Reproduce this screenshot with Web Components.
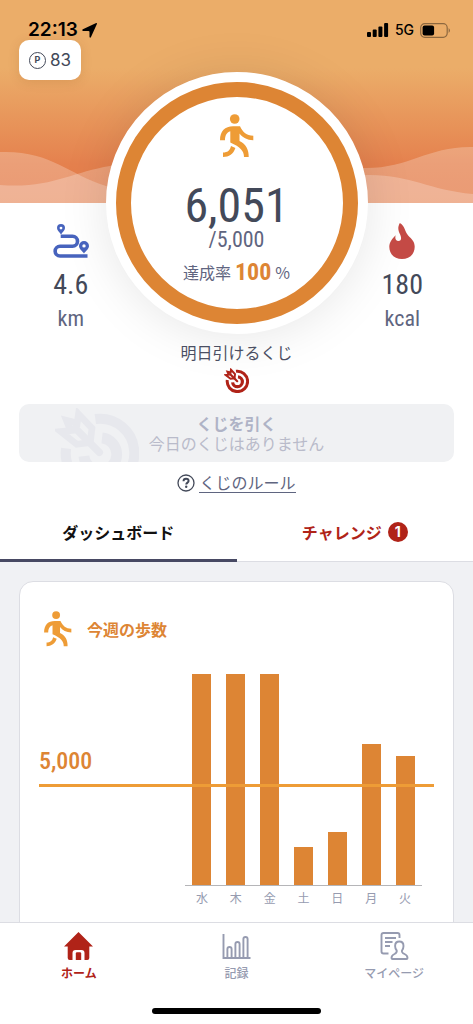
<!DOCTYPE html>
<html lang="ja">
<head>
<meta charset="utf-8">
<meta name="viewport" content="width=device-width, initial-scale=1">
<title>ホーム</title>
<style>
  html, body { margin: 0; height: 100%; }
  body {
    font-family: "Noto Sans CJK JP", sans-serif;
    font-size: 16px; line-height: 20px; color: #4b4f63;
    --orange: #dd8534; --amber: #ee9c36; --red: #b02318; --ink: #434959; --muted: #969bb0; --soft: #5f6580;
    --line: #dcdde3; --panel: #f0f1f4;
    --narrow: "Liberation Sans Narrow", "Roboto Condensed", "Arial Narrow", Roboto, sans-serif;
  }
</style>
</head>
<body>
<walk-app>
  <hero-panel>
    <status-bar slot="top" time="22:13" network="5G"></status-bar>
    <points-badge slot="top" value="83"></points-badge>
    <stat-tile slot="left" value="4.6" unit="km"><app-icon name="route"></app-icon></stat-tile>
    <step-ring slot="center" steps="6,051" goal="/5,000" rate="100"></step-ring>
    <stat-tile slot="right" value="180" unit="kcal"><app-icon name="flame"></app-icon></stat-tile>
  </hero-panel>
  <lottery-panel></lottery-panel>
  <tab-bar></tab-bar>
  <chart-card heading="今週の歩数" goal="5,000"></chart-card>
  <bottom-nav slot="nav"></bottom-nav>
</walk-app>

<script>
const ICONS = {
  walk: ['0 0 34 44', `<g fill="currentColor"><circle cx="14.7" cy="5" r="4.8"/><path d="M0 26.3C0 17 5 12.3 13 12.3H20C23 18.500 26.500 21.500 33.300 21.700V26.300C27 26 22.500 23.500 19.500 19.500V27C26 30 29 36 28.700 43H24C24 37 20.500 33 10.300 28.500V17.300C6.500 18.500 5 22 5 26.300Z"/><path d="M3 43V38.500C7.500 38.500 10 36.500 11 32L15.400 34C13.500 40 9 43 3 43Z"/></g>`],
  route: ['0 0 36 34', `<path d="M7.700 12.300H19.500a5 5 0 0 1 0 10H7a4.850 4.850 0 0 0 0 9.700H34.500" fill="none" stroke="currentColor" stroke-width="3.600"/><path fill="currentColor" fill-rule="evenodd" d="M8 0a4 4 0 0 1 4 4C12 6.500 9.500 8 8 10.500C6.500 8 4 6.500 4 4a4 4 0 0 1 4-4Zm0 2.700a1.400 1.400 0 1 0 0 2.800a1.400 1.400 0 1 0 0-2.800ZM31 17a5 5 0 0 1 5 5C36 25 32.700 27 31 29.500C29.300 27 26 25 26 22a5 5 0 0 1 5-5Zm0 3.200a1.700 1.700 0 1 0 0 3.400a1.700 1.700 0 1 0 0-3.400Z"/>`],
  flame: ['0 0 24 34', `<path fill="currentColor" d="M10 0C15 3 14.500 8 18 12C21 15 24 17.500 24 22.500C24 30 18.500 34 12 34S0 30 0 22.500C0 18 3 14.500 6 11.500C5 15.500 6.500 17 8.500 17C12 17 11.500 13.500 10 10.500C8 6.500 8 3.500 10 0Z"/>`],
  target: ['0 0 25 25', `<g fill="none" stroke="currentColor"><path stroke-width="3" d="M12 3.300A10.200 10.200 0 1 1 3.300 12"/><path stroke-width="3.200" d="M14 8.900A4.900 4.900 0 1 1 8.600 14.300"/><path stroke-width="2" d="M7 1.800L11 6L10.500 10.300L6.500 10.800L1.700 7L4.600 6.700L3.400 3.700L6.600 4.500Z"/><path stroke-width="2.200" stroke-linecap="round" d="M6 6L13.200 13.200"/></g>`],
  help: ['0 0 18 18', `<g fill="none" stroke="currentColor"><circle cx="9" cy="9" r="8" stroke-width="1.300"/><path stroke-width="1.900" d="M6.500 7.300C6.500 5.700 7.600 4.800 9 4.800S11.600 5.700 11.600 7C11.600 8.600 9.200 8.700 9.200 10.600"/></g><circle cx="9.200" cy="12.800" r="1.200" fill="currentColor"/>`],
  arrow: ['0 0 15 15', `<path fill="currentColor" d="M14.200.100Q15.200-.200 14.900.900L9 14Q8.200 15.400 7.500 14V9Q7.500 8 6.500 8H1Q-.600 7.200.900 6.200Z"/>`],
  signal: ['0 0 22 14', `<g fill="currentColor"><rect y="9" width="4" height="5" rx="1"/><rect x="5.700" y="6.500" width="4" height="7.500" rx="1"/><rect x="11.400" y="3.500" width="4" height="10.500" rx="1"/><rect x="17.100" width="4" height="14" rx="1"/></g>`],
  battery: ['0 0 31 15', `<rect x=".700" y=".700" width="26.500" height="13.600" rx="4" fill="none" stroke="#000" stroke-opacity=".4" stroke-width="1.200"/><path d="M28.700 5Q31 7.500 28.700 10Z" fill-opacity=".45"/><rect x="2.600" y="2.600" width="11.500" height="9.800" rx="2"/>`],
  home: ['0 0 29 28', `<path fill="currentColor" d="M14.500 0L29 14.500H25.300V26Q25.300 28 23.300 28H20.500V21Q20.500 18 17.500 18H11.500Q8.500 18 8.500 21V28H5.700Q3.700 28 3.700 26V14.500H0Z"/><path fill="currentColor" d="M11.800 28V21.500Q11.800 20.300 13 20.300H16Q17.200 20.300 17.200 21.500V28Z"/>`],
  record: ['0 0 28 28', `<path d="M1 2V26H28M4.900 26V17Q4.900 15 7 15T9.100 17V26M12.900 26V12Q12.900 10 15 10T17.100 12V26M20.900 26V7Q20.900 5 23 5T25.100 7V26" fill="none" stroke="currentColor" stroke-width="1.900"/>`],
  person: ['0 0 28 28', `<g fill="none" stroke="currentColor" stroke-width="1.900"><path d="M8 21.500H3Q1 21.500 1 19.500V3Q1 1 3 1H17Q19 1 19 3V6M4.500 6H15.500M4.500 10H12M4.500 14H9.500"/><path d="M18.800 9.500C21.500 9.500 23 11.300 23 14C23 16.300 22.300 17.500 21.500 18.500C21 20.500 21.800 21 24 22Q27 23.300 27 26Q27 27 26 27H12Q11 27 11 26Q11 23.300 14 22C16 21 16.700 20.500 16.200 18.500C15.300 17.500 14.600 16.300 14.600 14C14.600 11.300 16 9.500 18.800 9.500Z"/></g>`]
};

function define(tag, css, html) {
  customElements.define(tag, class extends HTMLElement {
    constructor() {
      super();
      this.attachShadow({ mode: 'open' });
    }
    connectedCallback() {
      const attr = name => this.getAttribute(name) || '';
      this.shadowRoot.innerHTML = `<style>:host,*{box-sizing:border-box}${css}</style>${html(attr)}`;
    }
  });
}

define('app-icon', `:host{display:inline-block;flex:none} svg{display:block;width:100%;height:100%}`,
  a => `<svg viewBox="${ICONS[a('name')][0]}" aria-hidden="true">${ICONS[a('name')][1]}</svg>`);

define('walk-app', `
  :host{display:grid;grid-template-rows:minmax(0,1fr) auto;height:100vh;background:#fff}
  main{overflow-y:auto;scrollbar-width:none;display:flex;flex-direction:column}`,
  () => `<main><slot></slot></main><slot name="nav"></slot>`);

define('hero-panel', `
  :host{display:grid;grid-template:203px auto / 1fr 262px 1fr;isolation:isolate;flex:none}
  .sky{grid-area:1/1/2/4;display:grid;background:linear-gradient(#ebad69 0,#ebad69 68px,#e5814e 164px,#e47b48)}
  .sky>*{grid-area:1/1}
  svg{width:100%;height:100%;display:block}
  .left{grid-area:2/1;padding:20px 0 0 36px}
  .right{grid-area:2/3;padding:20px 36px 0 0}
  .center{grid-area:1/2/3/3;padding-top:72px}`,
  () => `<div class="sky"><svg viewBox="0 0 473 203" preserveAspectRatio="none" aria-hidden="true"><g fill="#fff" fill-opacity=".24"><path d="M0 152C50 150 68 174 106 186C190 212 280 166 366 168C410 168 428 146 473 147V203H0Z"/><path d="M0 185C50 189 72 172 110 166C190 150 270 178 366 175C410 174 428 190 473 194V203H0Z"/></g></svg>
  <div><slot name="top"></slot></div></div>
  <div class="center"><slot name="center"></slot></div>
  <div class="left"><slot name="left"></slot></div>
  <div class="right"><slot name="right"></slot></div>`);

define('status-bar', `
  :host{display:flex;justify-content:space-between;align-items:center;height:40px;padding:20px 22px 0 28px;color:#000;font-family:Inter,sans-serif}
  div{display:flex;align-items:center;gap:6px}
  .time{font-size:19px;font-weight:600;gap:4px}
  .net{font-size:14px;font-weight:500}
  .arrow{width:15px;height:15px}.signal{width:22px;height:14px}.battery{width:31px;height:15px}`,
  a => `<div class="time"><span>${a('time')}</span><app-icon class="arrow" name="arrow"></app-icon></div>
  <div class="net"><app-icon class="signal" name="signal"></app-icon><span>${a('network')}</span><app-icon class="battery" name="battery"></app-icon></div>`);

define('points-badge', `
  :host{display:block;padding-left:19px}
  button{display:flex;align-items:center;justify-content:center;gap:4px;width:62px;height:40px;padding:0;border:0;border-radius:10px;background:#fff;color:var(--ink);font:400 17px/20px Inter,sans-serif;box-shadow:0 2px 12px rgba(120,60,0,.14)}
  i{display:grid;place-items:center;width:17px;height:17px;border:1px solid;border-radius:50%;font:700 9px/10px Inter,sans-serif}`,
  a => `<button type="button"><i>P</i>${a('value')}</button>`);

define('stat-tile', `
  :host{display:flex;flex-direction:column;align-items:center;font-family:var(--narrow);color:var(--ink)}
  ::slotted(app-icon){width:36px;height:36px;color:#4763bd}
  :host([slot=right]) ::slotted(app-icon){color:#c44a45}
  strong{font-weight:400;font-size:28px;line-height:36px;margin-top:8px}
  span{font-weight:400;font-size:22px;line-height:32px;color:var(--soft)}`,
  a => `<slot></slot><strong>${a('value')}</strong><span>${a('unit')}</span>`);

define('step-ring', `
  :host{display:flex;flex-direction:column;align-items:center;height:262px;border-radius:50%;border:10px solid #fff;background:#fff;box-shadow:0 2px 50px rgba(0,0,0,.1)}
  .ring{width:100%;height:100%;border:15px solid var(--orange);border-radius:50%;display:flex;flex-direction:column;align-items:center;padding-top:17px}
  app-icon{width:34px;height:44px;color:var(--amber)}
  .steps{font:400 48px/48px var(--narrow);color:var(--ink);margin-top:24px}
  .goal{font:400 22px/20px var(--narrow);color:var(--soft)}
  .rate{display:flex;align-items:center;gap:4px;margin-top:8px;line-height:28px;color:var(--soft)}
  b{font:700 24px/28px var(--narrow);color:var(--orange)}`,
  a => `<div class="ring"><app-icon name="walk"></app-icon><div class="steps">${a('steps')}</div><div class="goal">${a('goal')}</div><div class="rate"><span>達成率</span><b>${a('rate')}</b><span>%</span></div></div>`);

define('lottery-panel', `
  :host{display:flex;flex-direction:column;align-items:center;padding:7px 19px 10px;flex:none;position:relative}
  p{margin:0}
  .mark{width:25px;height:25px;margin-top:6px;color:var(--red)}
  button{display:grid;grid-template:58px / 1fr auto 1fr;align-items:center;width:100%;height:58px;margin-top:11px;padding:0;border:0;border-radius:10px;background:#f0f1f3;color:#b9bbca;font:400 16px/20px "Noto Sans CJK JP",sans-serif;overflow:hidden}
  button b{display:block;color:#afb3c6}
  .ghost{align-self:start;width:84px;height:84px;margin:4px 0 0 36px;color:#e7e8ed}
  a{display:flex;align-items:center;gap:4px;margin-top:10px;color:var(--soft);text-decoration:none}
  a app-icon{width:18px;height:18px;color:var(--ink)}
  a span{border-bottom:1px solid}`,
  () => `<p>明日引けるくじ</p><app-icon class="mark" name="target"></app-icon>
  <button type="button" disabled><app-icon class="ghost" name="target"></app-icon><span><b>くじを引く</b>今日のくじはありません</span></button>
  <a href="#rules"><app-icon name="help"></app-icon><span>くじのルール</span></a>`);

define('tab-bar', `
  :host{display:grid;grid-template-columns:1fr 1fr;flex:none;border-bottom:1px solid var(--line)}
  button{display:flex;align-items:center;justify-content:center;gap:6px;height:59px;padding:2px 0 0;margin-bottom:-1px;border:0;border-bottom:3px solid transparent;background:none;color:var(--red);font:700 16px/20px "Noto Sans CJK JP",sans-serif}
  [aria-selected=true]{color:#111;border-color:#474963}
  i{display:grid;place-items:center;width:20px;height:20px;border-radius:50%;background:var(--red);color:#fff;font:700 14px/20px Inter,sans-serif}`,
  () => `<button role="tab" aria-selected="true">ダッシュボード</button><button role="tab" aria-selected="false">チャレンジ<i>1</i></button>`);

const WEEK = [['水', 100], ['木', 100], ['金', 100], ['土', 18], ['日', 25], ['月', 67], ['火', 61]];
define('chart-card', `
  :host{display:block;flex:1 0 auto;padding:19px 19px 20px;background:var(--panel)}
  section{background:#fff;border:1px solid var(--line);border-radius:14px;padding:29px 19px 40px}
  header{display:flex;align-items:center;gap:14px;padding-left:4px;color:var(--orange)}
  app-icon{width:30px;height:36px;color:var(--amber)}
  h2{margin:0;font-size:16px;line-height:20px;font-weight:700}
  .chart{position:relative;margin-top:27px;display:grid;grid-template-columns:minmax(0,1fr) 60% 12px}
  .plot{grid-column:2;display:grid;grid-template-columns:repeat(7,1fr);height:212px;align-items:end;justify-items:center;border-bottom:1px solid #b5b5b8}
  .plot i{width:19px;background:var(--orange)}
  .days{grid-column:2;display:grid;grid-template-columns:repeat(7,1fr);text-align:center;font-size:12px;line-height:16px;margin-top:4px;color:var(--muted)}
  .goal{position:absolute;inset:73px 0 auto;height:40px;font:500 24px/28px var(--narrow);color:var(--orange);border-bottom:3px solid var(--amber)}`,
  a => `<section><header><app-icon name="walk"></app-icon><h2>${a('heading')}</h2></header>
  <div class="chart"><div class="plot">${WEEK.map(d => `<i style="height:${d[1]}%"></i>`).join('')}</div>
  <div class="days">${WEEK.map(d => `<span>${d[0]}</span>`).join('')}</div><div class="goal">${a('goal')}</div></div></section>`);

define('bottom-nav', `
  :host{display:block;background:#fff;border-top:1px solid var(--line)}
  nav{display:grid;grid-template-columns:repeat(3,1fr);padding-top:9px}
  a{display:flex;flex-direction:column;align-items:center;gap:4px;color:var(--muted);font-size:12px;line-height:18px;font-weight:500;text-decoration:none}
  a[aria-current]{color:var(--red);font-weight:700}
  app-icon{width:29px;height:28px}
  .bar{width:169px;height:6px;border-radius:3px;background:#000;margin:26px auto 10px}`,
  () => `<nav><a href="#home" aria-current="page"><app-icon name="home"></app-icon>ホーム</a><a href="#record"><app-icon name="record"></app-icon>記録</a><a href="#mypage"><app-icon name="person"></app-icon>マイページ</a></nav><div class="bar"></div>`);
</script>
</body>
</html>
